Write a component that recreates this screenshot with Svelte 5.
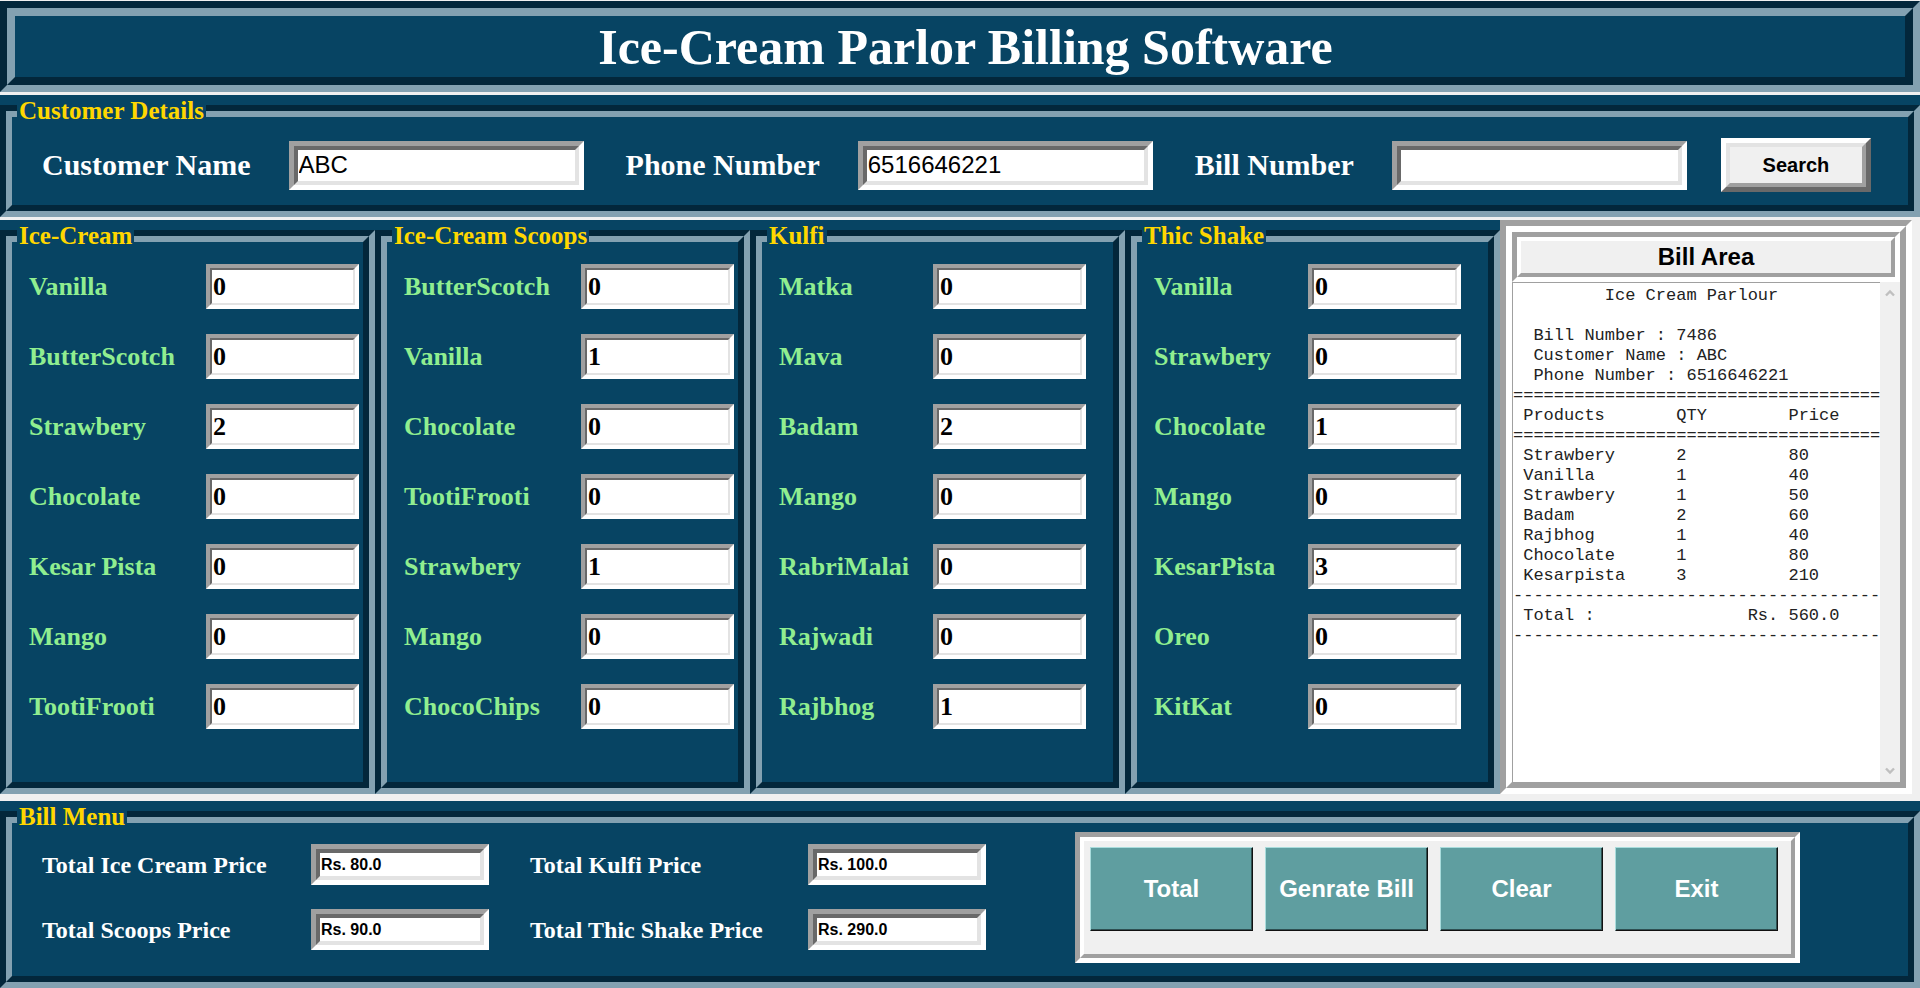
<script>
  const customerFields = [
    { id: 'customer-name', label: 'Customer Name', value: 'ABC' },
    { id: 'phone-number', label: 'Phone Number', value: '6516646221' },
    { id: 'bill-number', label: 'Bill Number', value: '' }
  ];

  const menus = [
    {
      title: 'Ice-Cream',
      items: [['Vanilla', 0], ['ButterScotch', 0], ['Strawbery', 2], ['Chocolate', 0], ['Kesar Pista', 0], ['Mango', 0], ['TootiFrooti', 0]]
    },
    {
      title: 'Ice-Cream Scoops',
      items: [['ButterScotch', 0], ['Vanilla', 1], ['Chocolate', 0], ['TootiFrooti', 0], ['Strawbery', 1], ['Mango', 0], ['ChocoChips', 0]]
    },
    {
      title: 'Kulfi',
      narrow: true,
      items: [['Matka', 0], ['Mava', 0], ['Badam', 2], ['Mango', 0], ['RabriMalai', 0], ['Rajwadi', 0], ['Rajbhog', 1]]
    },
    {
      title: 'Thic Shake',
      narrow: true,
      items: [['Vanilla', 0], ['Strawbery', 0], ['Chocolate', 1], ['Mango', 0], ['KesarPista', 3], ['Oreo', 0], ['KitKat', 0]]
    }
  ];

  const totals = [
    { id: 'total-ice-cream', label: 'Total Ice Cream Price', value: 'Rs. 80.0' },
    { id: 'total-kulfi', label: 'Total Kulfi Price', value: 'Rs. 100.0' },
    { id: 'total-scoops', label: 'Total Scoops Price', value: 'Rs. 90.0' },
    { id: 'total-shake', label: 'Total Thic Shake Price', value: 'Rs. 290.0' }
  ];

  const actions = ['Total', 'Genrate Bill', 'Clear', 'Exit'];

  const lines = [
    ['Strawbery', 2, 80],
    ['Vanilla', 1, 40],
    ['Strawbery', 1, 50],
    ['Badam', 2, 60],
    ['Rajbhog', 1, 40],
    ['Chocolate', 1, 80],
    ['Kesarpista', 3, 210]
  ];

  const row = (a, b, c) => ' ' + a.padEnd(15) + String(b).padEnd(11) + c;

  const bill = [
    '         Ice Cream Parlour',
    '',
    '  Bill Number : 7486',
    '  Customer Name : ABC',
    '  Phone Number : 6516646221',
    '='.repeat(36),
    row('Products', 'QTY', 'Price'),
    '='.repeat(36),
    ...lines.map(([a, b, c]) => row(a, b, c)),
    '-'.repeat(36),
    ' Total :'.padEnd(23) + 'Rs. 560.0',
    '-'.repeat(36)
  ].join('\n');
</script>

<div class="page">
  <header class="title-outer">
    <h1>Ice-Cream Parlor Billing Software</h1>
  </header>

  <fieldset class="frame">
    <legend>Customer Details</legend>
    <div class="ring">
      <div class="ring-inner customer">
        {#each customerFields as f}
          <div class="field">
            <label for={f.id}>{f.label}</label>
            <span class="sunken"><input id={f.id} type="text" value={f.value} /></span>
          </div>
        {/each}
        <button type="button" class="search"><span>Search</span></button>
      </div>
    </div>
  </fieldset>

  <main>
    {#each menus as menu, m}
      <fieldset class="frame">
        <legend>{menu.title}</legend>
        <div class="ring">
          <div class="ring-inner menu" class:narrow={menu.narrow}>
            {#each menu.items as [name, qty], i}
              <label for="item-{m}-{i}">{name}</label>
              <span class="sunken thin"><input id="item-{m}-{i}" type="text" value={qty} /></span>
            {/each}
          </div>
        </div>
      </fieldset>
    {/each}

    <section class="bill">
      <div class="bill-inner">
        <div class="bill-title"><h2 id="bill-title">Bill Area</h2></div>
        <div class="bill-body">
          <textarea aria-labelledby="bill-title" readonly value={bill}></textarea>
          <div class="scrollbar">
            <svg width="12" height="12" viewBox="0 0 12 12"><path d="M2 8.5 6 4.5l4 4" /></svg>
            <svg width="12" height="12" viewBox="0 0 12 12"><path d="M2 3.5 6 7.5l4-4" /></svg>
          </div>
        </div>
      </div>
    </section>
  </main>

  <fieldset class="frame">
    <legend>Bill Menu</legend>
    <div class="ring">
      <div class="ring-inner bill-menu">
        <div class="totals">
          {#each totals as t}
            <label for={t.id}>{t.label}</label>
            <span class="sunken"><input id={t.id} type="text" value={t.value} /></span>
          {/each}
        </div>
        <div class="panel">
          <div class="panel-inner">
            {#each actions as action}
              <button type="button">{action}</button>
            {/each}
          </div>
        </div>
      </div>
    </div>
  </fieldset>
</div>

<style>
  :global(body) {
    margin: 0;
    background: #f0f0f0;
  }

  .page {
    --base: #074463;
    --shade: #03273b;
    --light: #83a1b1;
    --serif: 'Liberation Serif', 'Times New Roman', serif;
    --sans: 'Liberation Sans', Arial, sans-serif;
    box-sizing: border-box;
    min-height: 100vh;
    padding-top: 1px;
    display: flex;
    flex-direction: column;
    gap: 3px;
    color: #fff;
    font-family: var(--serif);
    font-weight: bold;
  }

  .page * {
    box-sizing: border-box;
  }

  /* Grooved title bar */
  .title-outer {
    border: 7px solid;
    border-color: var(--shade) var(--light) var(--light) var(--shade);
    background: var(--base);
  }

  h1 {
    margin: 0;
    padding: 1px 0 0 11px;
    border: 8px solid;
    border-color: var(--light) var(--shade) var(--shade) var(--light);
    font-size: 50px;
    line-height: 60px;
    text-align: center;
  }

  /* Labelled group frames */
  .frame {
    position: relative;
    min-width: 0;
    margin: 0;
    padding: 10px 0 0;
    border: 0;
    background: var(--base);
    display: flex;
    flex-direction: column;
  }

  legend {
    position: absolute;
    top: 0;
    left: 17px;
    padding: 0 2px;
    background: var(--base);
    color: #ffd700;
    font-size: 25px;
    line-height: 32px;
    white-space: nowrap;
  }

  .ring {
    flex: 1;
    display: flex;
    border: 6px solid;
    border-color: var(--shade) var(--light) var(--light) var(--shade);
  }

  .ring-inner {
    flex: 1;
    min-width: 0;
    border: 6px solid;
    border-color: var(--light) var(--shade) var(--shade) var(--light);
  }

  label {
    white-space: nowrap;
  }

  .sunken {
    display: flex;
    border: 5px solid;
    border-color: #a0a0a0 #fff #fff #a0a0a0;
  }

  input {
    width: 100%;
    min-width: 0;
    margin: 0;
    padding: 0 1px;
    border: 4px solid;
    border-color: #696969 #e3e3e3 #e3e3e3 #696969;
    border-radius: 0;
    outline: 0;
    background: #fff;
    color: #000;
  }

  .thin {
    border-width: 4px;
  }

  .thin input {
    border-width: 2px;
  }

  /* Customer row */
  .customer {
    display: flex;
    align-items: center;
    gap: 42px;
    padding: 21px 30px 13px;
    font-size: 30px;
    line-height: 36px;
  }

  .field {
    display: flex;
    align-items: center;
    gap: 38px;
  }

  .field .sunken {
    width: 295px;
    height: 49px;
  }

  .field input {
    font: 24px var(--sans);
  }

  .search {
    width: 150px;
    height: 54px;
    margin: 0 0 0 -8px;
    padding: 0;
    display: flex;
    border: 5px solid;
    border-color: #fff #696969 #696969 #fff;
    border-radius: 0;
    background: #f0f0f0;
    color: #000;
    font: bold 20px var(--sans);
  }

  .search span {
    flex: 1;
    align-self: stretch;
    display: grid;
    place-items: center;
    border: 4px solid;
    border-color: #e3e3e3 #a0a0a0 #a0a0a0 #e3e3e3;
  }

  /* Menu columns and bill */
  main {
    flex: 1;
    display: grid;
    grid-template-columns: repeat(4, 375fr) 412fr;
    padding-right: 8px;
    margin-bottom: 4px;
  }

  .menu {
    display: grid;
    grid-template-columns: 148px 153px;
    grid-auto-rows: 45px;
    align-content: start;
    align-items: center;
    gap: 25px 29px;
    padding: 22px 0 53px 17px;
    color: #90ee90;
    font-size: 26px;
    line-height: 30px;
  }

  .menu.narrow {
    grid-template-columns: 125px 153px;
  }

  .menu .sunken {
    height: 45px;
  }

  .menu input {
    font: bold 26px var(--serif);
  }

  .bill {
    display: flex;
    border: 6px solid;
    border-color: #a0a0a0 #fff #fff #a0a0a0;
  }

  .bill-inner {
    flex: 1;
    min-width: 0;
    display: flex;
    flex-direction: column;
    border: 6px solid;
    border-color: #fff #a0a0a0 #a0a0a0 #fff;
  }

  .bill-title {
    border: 5px solid;
    border-color: #a0a0a0 #fff #fff #a0a0a0;
  }

  h2 {
    margin: 0;
    border: 4px solid;
    border-color: #fff #a0a0a0 #a0a0a0 #fff;
    background: #f0f0f0;
    color: #000;
    font: bold 24px/32px var(--sans);
    text-align: center;
  }

  .bill-body {
    flex: 1;
    display: flex;
  }

  textarea {
    flex: 1;
    min-width: 0;
    margin: 0;
    padding: 3px 0 0;
    border: 0 solid #a0a0a0;
    border-width: 1px 0 0 1px;
    border-radius: 0;
    outline: 0;
    resize: none;
    overflow: hidden;
    white-space: pre;
    background: #fff;
    color: #222;
    font: 17px/20px 'Liberation Mono', 'Courier New', monospace;
  }

  .scrollbar {
    width: 20px;
    padding: 5px 4px;
    display: flex;
    flex-direction: column;
    justify-content: space-between;
    background: #f0f0f0;
  }

  .scrollbar path {
    fill: none;
    stroke: #bfbfbf;
    stroke-width: 2.4;
  }

  /* Bill menu */
  .bill-menu {
    display: flex;
    align-items: flex-start;
    gap: 89px;
    padding: 9px 30px 13px;
  }

  .totals {
    display: grid;
    grid-template-columns: 228px 178px 237px 178px;
    align-items: center;
    gap: 24px 41px;
    padding-top: 12px;
    font-size: 24px;
    line-height: 30px;
  }

  .totals .sunken {
    height: 41px;
  }

  .totals input {
    font: bold 16px var(--sans);
  }

  .panel {
    height: 131px;
    display: flex;
    border: 5px solid;
    border-color: #a0a0a0 #fff #fff #a0a0a0;
  }

  .panel-inner {
    display: flex;
    align-items: flex-start;
    gap: 12px;
    padding: 6px 13px 6px 6px;
    border: 4px solid;
    border-color: #fff #a0a0a0 #a0a0a0 #fff;
    background: #f0f0f0;
  }

  .panel button {
    width: 163px;
    height: 84px;
    padding: 0;
    border: 1px solid;
    border-color: #a9dcdc #111 #111 #a9dcdc;
    border-radius: 0;
    box-shadow: inset -1px -1px #2f5052;
    background: #5f9ea0;
    color: #fff;
    font: bold 24px var(--sans);
  }
</style>
